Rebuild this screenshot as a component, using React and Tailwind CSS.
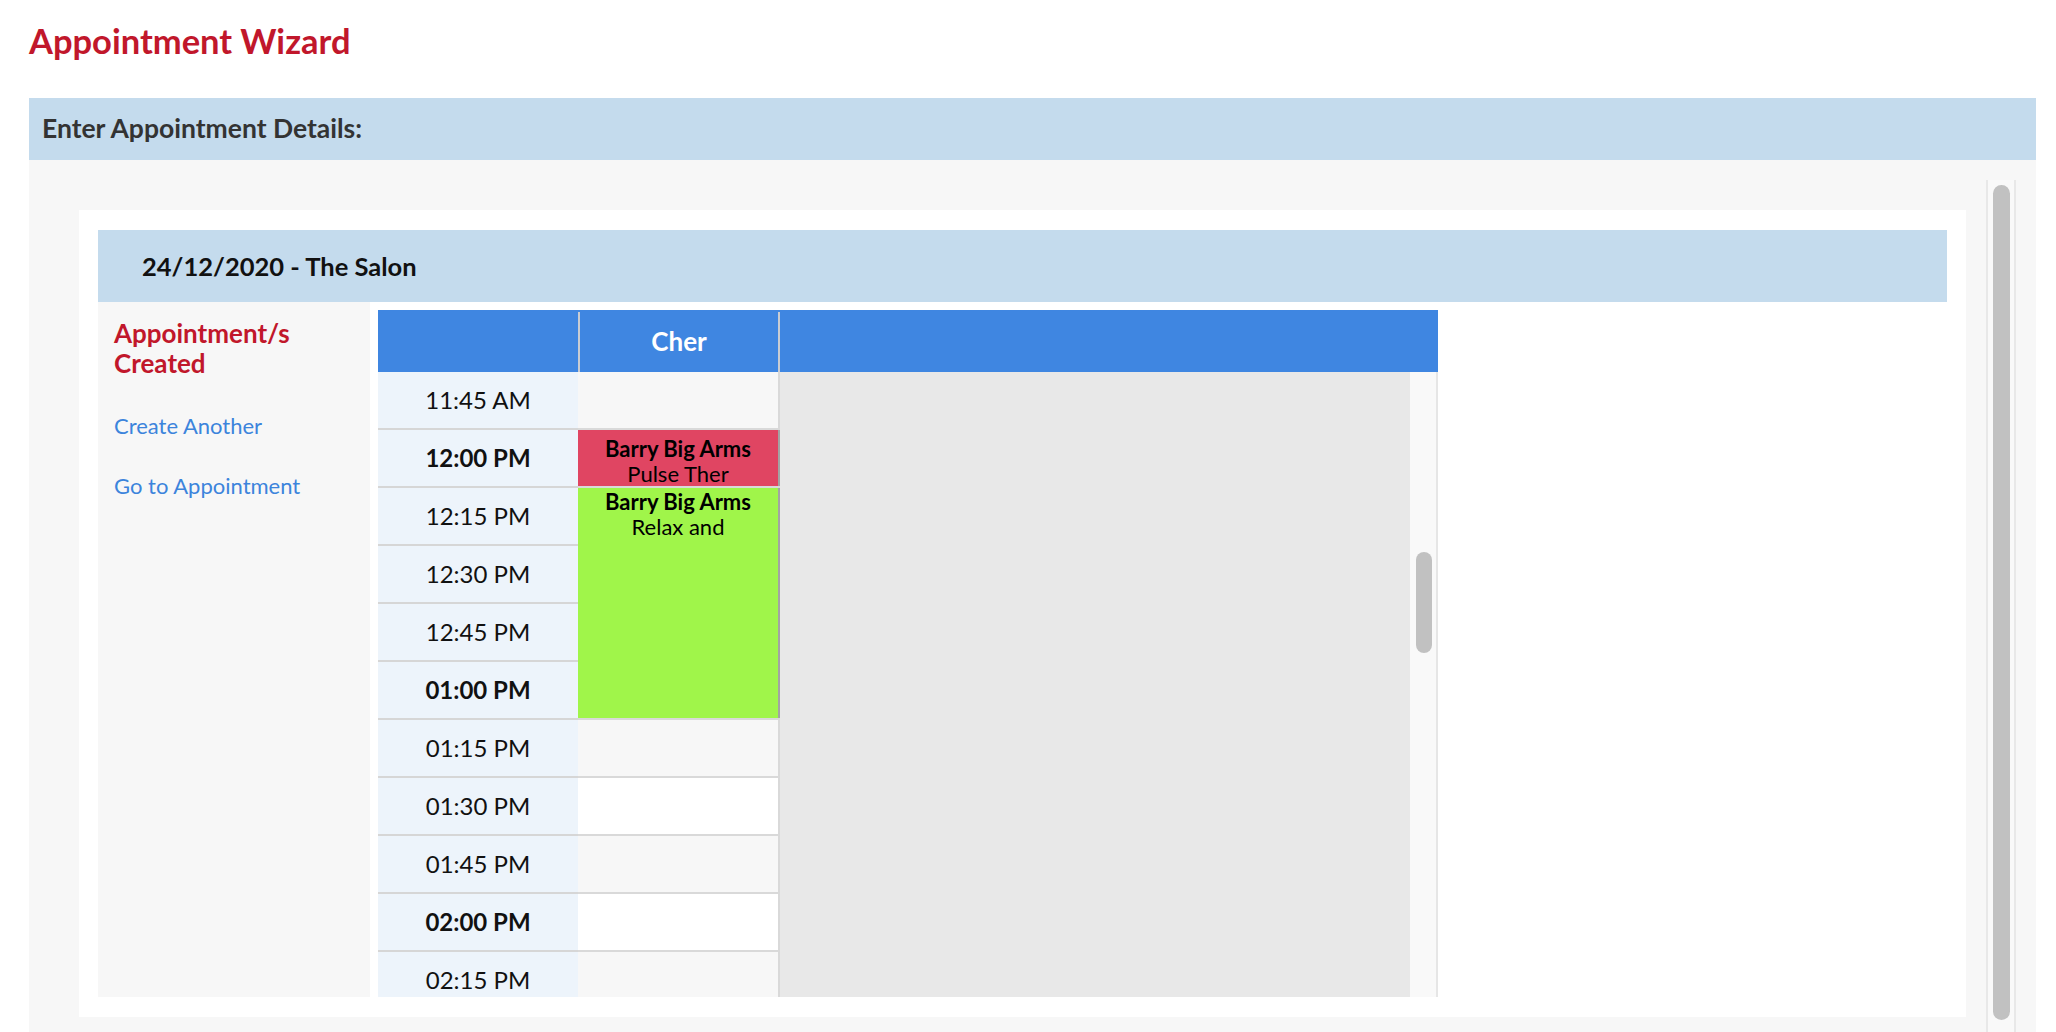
import React from "react";

const rows = [
  { time: "11:45 AM", bold: false },
  { time: "12:00 PM", bold: true },
  { time: "12:15 PM", bold: false },
  { time: "12:30 PM", bold: false },
  { time: "12:45 PM", bold: false },
  { time: "01:00 PM", bold: true },
  { time: "01:15 PM", bold: false },
  { time: "01:30 PM", bold: false },
  { time: "01:45 PM", bold: false },
  { time: "02:00 PM", bold: true },
  { time: "02:15 PM", bold: false },
];

function Schedule() {
  return (
    <div className="w-[1060px] mt-[8px] flex flex-col">
      {/* header */}
      <div className="flex h-[62px] bg-[#3f86e1]">
        <div className="w-[200px]" />
        <div className="w-[202px] flex items-center justify-center relative">
          <div className="absolute left-0 top-[2px] bottom-0 w-[2px] bg-[#c9ccd2]" />
          <div className="absolute right-0 top-[2px] bottom-0 w-[2px] bg-[#c9ccd2]" />
          <span className="text-white font-bold text-[26px] leading-none">Cher</span>
        </div>
        <div className="flex-1" />
      </div>

      {/* body */}
      <div className="flex h-[625px] overflow-hidden">
        <div className="w-[402px] relative">
          {rows.map((r, i) => (
            <div key={r.time} className="flex h-[58px] shrink-0">
              <div className="w-[200px] bg-[#edf4fb] border-b-2 border-[#d6d6d6] flex items-center justify-center">
                <span className={`text-[24px] text-[#111] ${r.bold ? "font-bold" : ""}`}>{r.time}</span>
              </div>
              <div
                className={`w-[202px] border-b-2 border-r-2 border-[#d9d9d9] ${
                  i % 2 === 0 ? "bg-[#f7f7f7]" : "bg-white"
                }`}
              />
            </div>
          ))}

          {/* appointments */}
          <div className="absolute left-[200px] top-[58px] w-[202px] h-[56px] bg-[#e04562] border-r-2 border-[#a3a3a3] pt-[6px] text-center text-[22px] leading-[25px] text-black overflow-hidden">
            <div className="font-bold">Barry Big Arms</div>
            <div>Pulse Ther</div>
          </div>
          <div className="absolute left-[200px] top-[116px] w-[202px] h-[230px] bg-[#a0f54a] border-r-2 border-[#a3a3a3] pt-[1px] text-center text-[22px] leading-[25px] text-black overflow-hidden">
            <div className="font-bold">Barry Big Arms</div>
            <div>Relax and</div>
          </div>
        </div>

        <div className="flex-1 bg-[#e8e8e8]" />

        {/* inner scrollbar */}
        <div className="w-[28px] bg-[#f9f9f9] border-r-2 border-[#e6e6e6] relative">
          <div className="absolute left-[6px] top-[180px] w-[16px] h-[101px] rounded-full bg-[#c1c1c1]" />
        </div>
      </div>
    </div>
  );
}

export default function App() {
  return (
    <div className="h-[1032px] overflow-hidden bg-white font-['Lato','Liberation_Sans',sans-serif]">
      <div className="pl-[29px] pt-[20px]">
        <h1 className="text-[34.5px] leading-[41px] font-bold text-[#c1172b]">Appointment Wizard</h1>
      </div>

      <div className="mt-[37px] ml-[29px] mr-[20px]">
        <div className="h-[62px] bg-[#c4dbed] flex items-center pl-[13px]">
          <h2 className="text-[26.5px] font-bold text-[#333]">Enter Appointment Details:</h2>
        </div>

        <div className="bg-[#f7f7f7] h-[880px] pt-[20px] pr-[20px] flex">
          <div className="flex-1 pt-[30px] pl-[50px] pr-[20px]">
            <div className="bg-white px-[19px] pt-[20px] pb-[20px] h-[807px]">
              <div className="h-[72px] bg-[#c4dbed] flex items-center pl-[44px]">
                <span className="text-[25.5px] font-bold text-[#111]">24/12/2020 - The Salon</span>
              </div>

              <div className="flex">
                <div className="w-[272px] h-[695px] bg-[#f7f7f7] pl-[16px] pt-[16px] mr-[8px]">
                  <div className="text-[26px] leading-[30px] font-bold text-[#c1172b]">
                    Appointment/s
                    <br />
                    Created
                  </div>
                  <div className="mt-[31px] text-[22px] text-[#3c84dc]">
                    <a href="#">Create Another</a>
                  </div>
                  <div className="mt-[27px] text-[22px] text-[#3c84dc]">
                    <a href="#">Go to Appointment</a>
                  </div>
                </div>
                <Schedule />
              </div>
            </div>
          </div>

          {/* outer scrollbar */}
          <div className="w-[30px] bg-[#f9f9f9] border-x-2 border-[#e8e8e8] relative">
            <div className="absolute left-[5px] top-[5px] w-[17px] h-[835px] rounded-full bg-[#c1c1c1]" />
          </div>
        </div>
      </div>
    </div>
  );
}
